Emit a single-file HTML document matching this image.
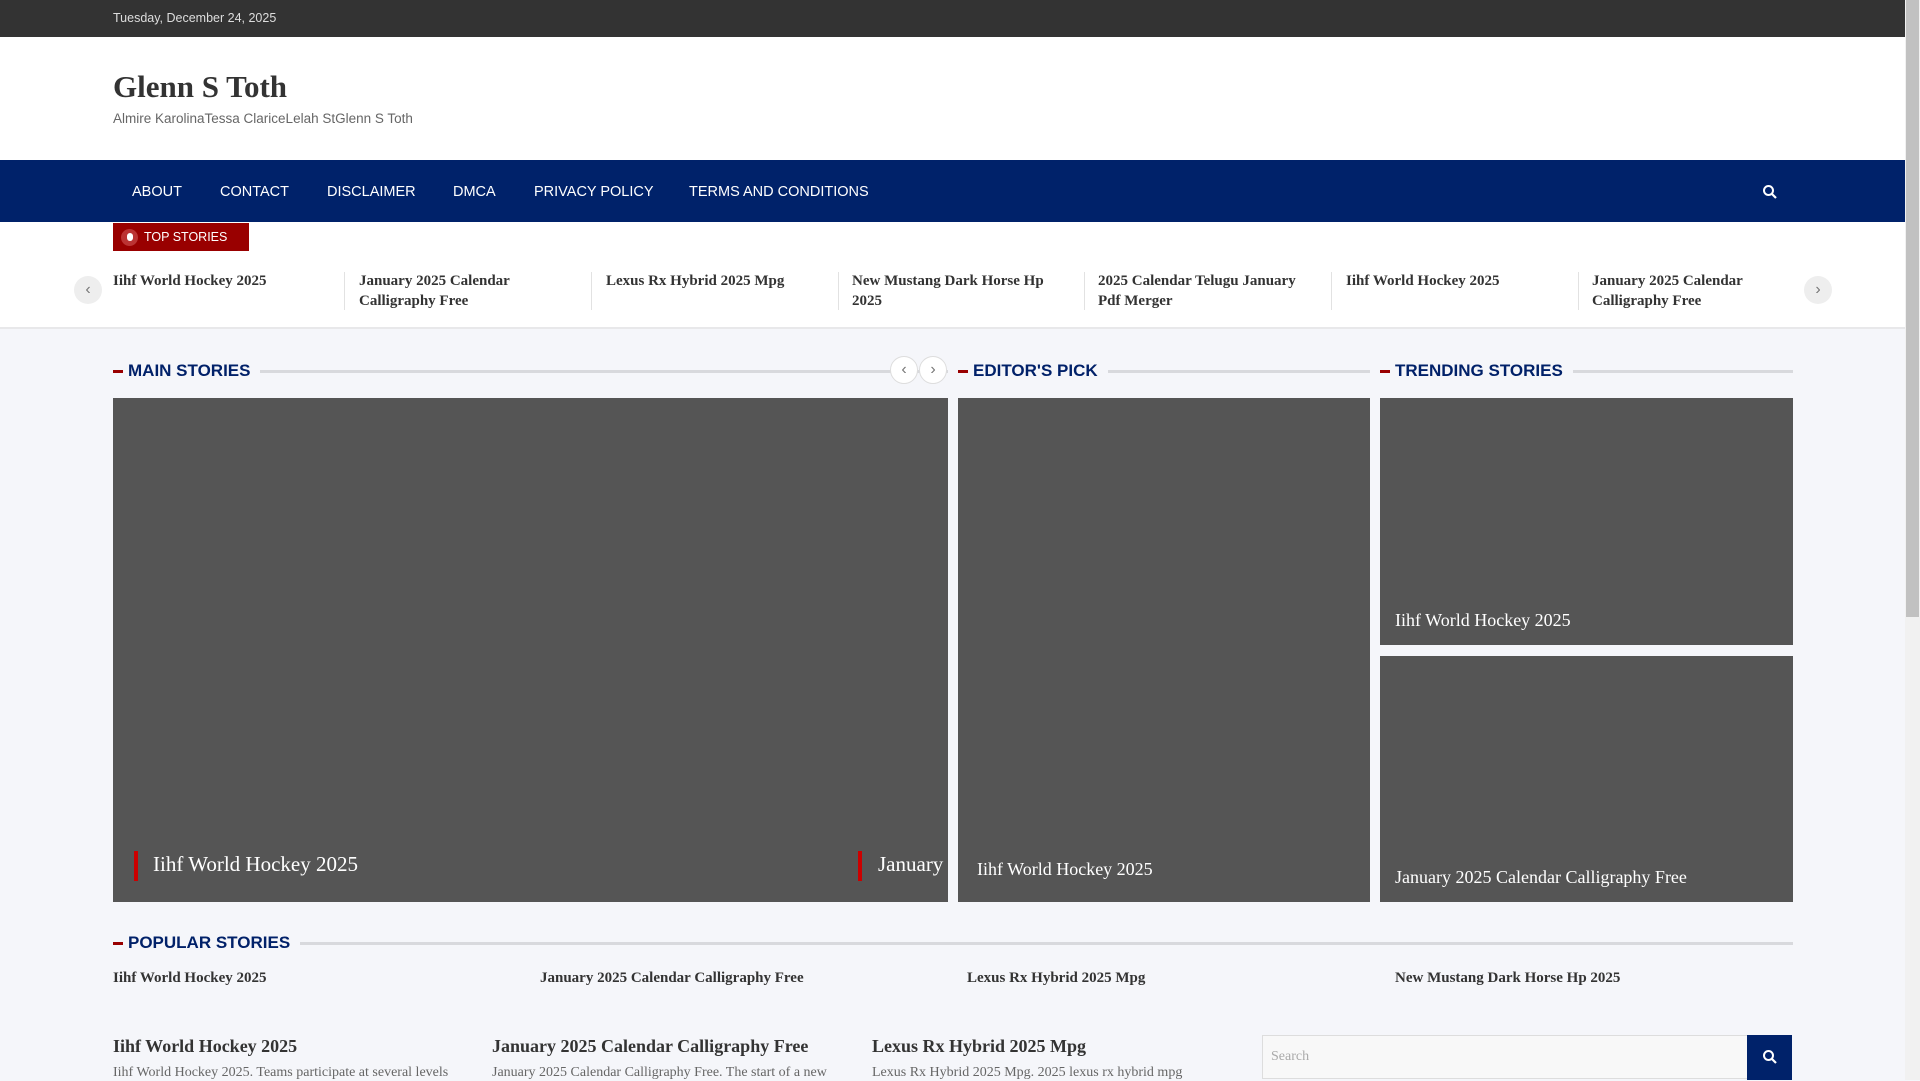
<!DOCTYPE html>
<html><head><meta charset="utf-8">
<style>
*{margin:0;padding:0;box-sizing:border-box}
body{width:1920px;height:1080px;overflow:hidden;position:relative;background:#f5f6fa;font-family:"Liberation Sans",sans-serif}
.a{position:absolute}
.serif{font-family:"Liberation Serif",serif}
.h{position:absolute;height:20px;display:flex;align-items:center;font-weight:bold;font-size:17px;color:#012169}
.h:before{content:"";width:10px;height:3px;background:#900;margin-right:5px}
.h span{flex:none}
.h i{flex:1;height:3px;background:#d8d9dd;margin-left:10px}
.box{position:absolute;background:#555}
.cap{position:absolute;color:#fff;font-family:"Liberation Serif",serif}
.tk{position:absolute;top:271px;font:bold 15px/20px "Liberation Serif",serif;color:#333;width:215px}
.sep{position:absolute;top:272px;width:1px;height:38px;background:#e2e2e2}
.circ{position:absolute;border-radius:50%;background:#eee;display:flex;align-items:center;justify-content:center;color:#777}
</style></head><body>
<div class="a" style="left:0;top:0;width:1905px;height:37px;background:#333"></div>
<div class="a" style="left:113px;top:11px;color:#ddd;font-size:12.5px">Tuesday, December 24, 2025</div>
<div class="a" style="left:0;top:37px;width:1905px;height:123px;background:#fff"></div>
<div class="a serif" style="left:113px;top:69px;font-size:31px;font-weight:bold;color:#333">Glenn S Toth</div>
<div class="a" style="left:113px;top:111px;font-size:13.5px;color:#666">Almire KarolinaTessa ClariceLelah StGlenn S Toth</div>
<div class="a" style="left:0;top:160px;width:1905px;height:62px;background:#00226a"></div>
<div class="a" style="left:0;top:184px;width:1000px;color:#fff;font-size:14.5px">
<span class="a" style="left:132px">ABOUT</span><span class="a" style="left:220px">CONTACT</span><span class="a" style="left:327px">DISCLAIMER</span><span class="a" style="left:453px">DMCA</span><span class="a" style="left:534px">PRIVACY POLICY</span><span class="a" style="left:689px">TERMS AND CONDITIONS</span></div>
<svg class="a" style="left:1762px;top:184px" width="16" height="16" viewBox="0 0 16 16"><circle cx="6.5" cy="6.5" r="4.5" fill="none" stroke="#fff" stroke-width="2"/><path d="M10 10l4 4" stroke="#fff" stroke-width="2.2"/></svg>
<div class="a" style="left:0;top:222px;width:1905px;height:107px;background:#fff;border-bottom:2px solid #e8e8ea"></div>
<div class="a" style="left:113px;top:223px;width:136px;height:28px;background:#900;color:#fff;font-size:12.5px;display:flex;align-items:center"><span style="width:17px;height:17px;border-radius:50%;background:#b33;margin:0 6px 0 8px;display:flex;align-items:center;justify-content:center"><span style="width:6px;height:8px;background:#fff;border-radius:3px"></span></span>TOP STORIES</div>
<div class="circ" style="left:74px;top:276px;width:28px;height:28px">‹</div>
<div class="circ" style="left:1804px;top:276px;width:28px;height:28px">›</div>
<div class="tk" style="left:113px">Iihf World Hockey 2025</div>
<div class="sep" style="left:344px"></div>
<div class="tk" style="left:359px">January 2025 Calendar Calligraphy Free</div>
<div class="sep" style="left:591px"></div>
<div class="tk" style="left:606px">Lexus Rx Hybrid 2025 Mpg</div>
<div class="sep" style="left:838px"></div>
<div class="tk" style="left:852px">New Mustang Dark Horse Hp 2025</div>
<div class="sep" style="left:1084px"></div>
<div class="tk" style="left:1098px">2025 Calendar Telugu January Pdf Merger</div>
<div class="sep" style="left:1331px"></div>
<div class="tk" style="left:1346px">Iihf World Hockey 2025</div>
<div class="sep" style="left:1578px"></div>
<div class="tk" style="left:1592px;width:200px">January 2025 Calendar Calligraphy Free</div>

<div class="h" style="left:113px;top:361px;width:835px"><span>MAIN STORIES</span><i></i></div>
<div class="circ" style="left:890px;top:356px;width:28px;height:28px;background:#fff;border:1px solid #ddd">‹</div>
<div class="circ" style="left:919px;top:356px;width:28px;height:28px;background:#fff;border:1px solid #ddd">›</div>
<div class="h" style="left:958px;top:361px;width:412px"><span>EDITOR'S PICK</span><i></i></div>
<div class="h" style="left:1380px;top:361px;width:413px"><span>TRENDING STORIES</span><i></i></div>
<div class="box" style="left:113px;top:398px;width:835px;height:504px;overflow:hidden">
<div class="a" style="left:21px;top:453px;width:4px;height:30px;background:#c00"></div>
<div class="cap" style="left:40px;top:454px;font-size:21px">Iihf World Hockey 2025</div>
<div class="a" style="left:745px;top:453px;width:4px;height:30px;background:#c00"></div>
<div class="cap" style="left:765px;top:454px;font-size:21px;white-space:nowrap">January 2025 Calendar</div>
</div>
<div class="box" style="left:958px;top:398px;width:412px;height:504px"><div class="cap" style="left:19px;top:461px;font-size:18px">Iihf World Hockey 2025</div></div>
<div class="box" style="left:1380px;top:398px;width:413px;height:247px"><div class="cap" style="left:15px;top:212px;font-size:18px">Iihf World Hockey 2025</div></div>
<div class="box" style="left:1380px;top:656px;width:413px;height:246px"><div class="cap" style="left:15px;top:211px;font-size:18px">January 2025 Calendar Calligraphy Free</div></div>

<div class="h" style="left:113px;top:933px;width:1680px"><span>POPULAR STORIES</span><i></i></div>
<div class="a serif" style="left:113px;top:970px;font-size:15px;font-weight:bold;color:#333">Iihf World Hockey 2025</div>
<div class="a serif" style="left:540px;top:970px;font-size:15px;font-weight:bold;color:#333">January 2025 Calendar Calligraphy Free</div>
<div class="a serif" style="left:967px;top:970px;font-size:15px;font-weight:bold;color:#333">Lexus Rx Hybrid 2025 Mpg</div>
<div class="a serif" style="left:1395px;top:970px;font-size:15px;font-weight:bold;color:#333">New Mustang Dark Horse Hp 2025</div>
<div class="a serif" style="left:113px;top:1036px;font-size:18px;font-weight:bold;color:#333">Iihf World Hockey 2025</div>
<div class="a serif" style="left:492px;top:1036px;font-size:18px;font-weight:bold;color:#333">January 2025 Calendar Calligraphy Free</div>
<div class="a serif" style="left:872px;top:1036px;font-size:18px;font-weight:bold;color:#333">Lexus Rx Hybrid 2025 Mpg</div>
<div class="a serif" style="left:113px;top:1065px;font-size:14px;color:#666">Iihf World Hockey 2025. Teams participate at several levels</div>
<div class="a serif" style="left:492px;top:1065px;font-size:14px;color:#666">January 2025 Calendar Calligraphy Free. The start of a new</div>
<div class="a serif" style="left:872px;top:1065px;font-size:14px;color:#666">Lexus Rx Hybrid 2025 Mpg. 2025 lexus rx hybrid mpg</div>
<div class="a serif" style="left:1262px;top:1035px;width:486px;height:44px;background:#f8f8f8;border:1px solid #ddd;color:#aaa;font-size:14px;padding:13px 8px">Search</div>
<div class="a" style="left:1747px;top:1035px;width:45px;height:45px;background:#00226a"></div>
<svg class="a" style="left:1762px;top:1049px" width="16" height="16" viewBox="0 0 16 16"><circle cx="6.5" cy="6.5" r="4.5" fill="none" stroke="#fff" stroke-width="2"/><path d="M10 10l4 4" stroke="#fff" stroke-width="2.2"/></svg>
<div class="a" style="left:1905px;top:0;width:15px;height:1080px;background:#f1f1f1"></div>
<div class="a" style="left:1906px;top:0;width:13px;height:617px;background:#c1c1c1"></div>
</body></html>
